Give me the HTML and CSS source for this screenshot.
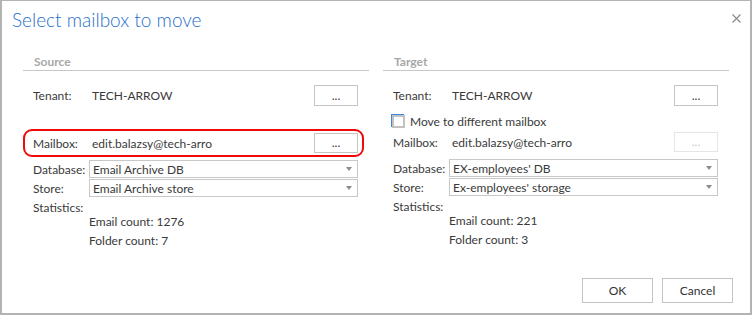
FILE: index.html
```html
<!DOCTYPE html>
<html>
<head>
<meta charset="utf-8">
<link rel="stylesheet" href="styles.css">
</head>
<body>
<div class="dialog">
  <div class="titlebar">
    <h1 class="title">Select mailbox to move</h1>
    <svg class="close" width="9" height="9" viewBox="0 0 9 9"><path d="M0.5 0.5 L8.5 8.5 M8.5 0.5 L0.5 8.5" stroke="#8a8a8a" stroke-width="1.1" fill="none"/></svg>
  </div>
  <div class="columns">
    <section class="col">
      <div class="sec-head">Source</div>
      <div class="row row-tenant">
        <span class="label">Tenant:</span>
        <span class="value">TECH-ARROW</span>
        <button class="btn-dots">...</button>
      </div>
      <div class="row highlight">
        <span class="label">Mailbox:</span>
        <span class="value">edit.balazsy@tech-arro</span>
        <button class="btn-dots">...</button>
      </div>
      <div class="row row-select row-db">
        <span class="label">Database:</span>
        <div class="select"><span>Email Archive DB</span><i class="arrow"></i></div>
      </div>
      <div class="row row-select row-store">
        <span class="label">Store:</span>
        <div class="select"><span>Email Archive store</span><i class="arrow"></i></div>
      </div>
      <div class="stats-label">Statistics:</div>
      <div class="stat">Email count: 1276</div>
      <div class="stat stat-2">Folder count: 7</div>
    </section>
    <section class="col col-right">
      <div class="sec-head">Target</div>
      <div class="row row-tenant">
        <span class="label">Tenant:</span>
        <span class="value">TECH-ARROW</span>
        <button class="btn-dots">...</button>
      </div>
      <label class="check-row"><span class="checkbox"></span>Move to different mailbox</label>
      <div class="row row-mailbox">
        <span class="label">Mailbox:</span>
        <span class="value">edit.balazsy@tech-arro</span>
        <button class="btn-dots disabled">...</button>
      </div>
      <div class="row row-select row-db-r">
        <span class="label">Database:</span>
        <div class="select"><span>EX-employees' DB</span><i class="arrow"></i></div>
      </div>
      <div class="row row-select row-store">
        <span class="label">Store:</span>
        <div class="select"><span>Ex-employees' storage</span><i class="arrow"></i></div>
      </div>
      <div class="stats-label">Statistics:</div>
      <div class="stat">Email count: 221</div>
      <div class="stat stat-2">Folder count: 3</div>
    </section>
  </div>
  <div class="footer">
    <button class="btn">OK</button>
    <button class="btn">Cancel</button>
  </div>
</div>
</body>
</html>
```
FILE: styles.css
```css
* { box-sizing: border-box; }
html, body { margin: 0; padding: 0; background: #fff; }
body {
  font-family: Lato, "Open Sans", sans-serif;
  font-size: 12px;
  color: #3a3a3a;
}
.dialog {
  width: 752px;
  height: 315px;
  border: 1px solid #b3b3b3;
  border-left-width: 2px;
  border-right-width: 2px;
  border-bottom-width: 2px;
  display: flex;
  flex-direction: column;
  background: #fff;
}
.titlebar {
  height: 52px;
  display: flex;
  justify-content: space-between;
  align-items: flex-start;
  padding: 7px 9px 0 10px;
}
.title {
  margin: 0;
  font-family: Lato, "Open Sans", sans-serif;
  font-weight: 300;
  font-size: 19px;
  line-height: 24px;
  color: #1f6fcc;
}
.close { margin-top: 6px; }
.columns {
  display: grid;
  grid-template-columns: 346px 346px;
  column-gap: 14px;
  padding-left: 21px;
}
.col { display: flex; flex-direction: column; }
.sec-head {
  height: 18px;
  line-height: 17px;
  border-bottom: 1px solid #c8c8c8;
  padding-left: 11px;
  font-weight: bold;
  color: #a8a8a8;
}
.row {
  display: grid;
  grid-template-columns: 56px 1fr 44px;
  align-items: center;
  padding: 0 11px 0 10px;
}
.row-select { grid-template-columns: 56px 1fr; }
.value { padding-left: 3px; }
.row-tenant { margin-top: 14px; height: 21px; }
.row-tenant .btn-dots { height: 21px; }
.highlight {
  margin-top: 23px;
  height: 28px;
  border: 2px solid #ee0a0a;
  border-radius: 9px;
  padding: 0 4px 0 8px;
  width: 341px;
}
.btn-dots {
  height: 20px;
  width: 44px;
  border: 1px solid #c4c4c4;
  background: #fff;
  font-family: inherit;
  font-size: 12px;
  color: #333;
  padding: 0;
  line-height: 14px;
}
.btn-dots.disabled { border-color: #e6e6e6; color: #c8c8c8; }
.row-db { margin-top: 3px; }
.row-store { margin-top: 1px; }
.select {
  height: 18px;
  border: 1px solid #c8c8c8;
  display: flex;
  align-items: center;
  justify-content: space-between;
  padding: 0 5px 0 3px;
}
.arrow {
  width: 0; height: 0;
  border-left: 3px solid transparent;
  border-right: 3px solid transparent;
  border-top: 4px solid #8c8c8c;
}
.stats-label {
  margin-top: 4px;
  height: 14px;
  line-height: 14px;
  padding-left: 10px;
}
.stat {
  height: 14px;
  line-height: 14px;
  padding-left: 66px;
}
.stat-2 { margin-top: 5px; }
.check-row {
  margin-top: 7px;
  height: 16px;
  display: flex;
  align-items: center;
  padding-left: 9px;
}
.checkbox {
  width: 13px;
  height: 13px;
  border: 2px solid #c2c2c2;
  margin-right: 5px;
  box-shadow: -1px -1px 0 #3f86d8;
}
.row-mailbox { margin-top: 3px; height: 20px; }
.row-db-r { margin-top: 7px; }
.footer {
  margin-top: auto;
  display: flex;
  justify-content: flex-end;
  gap: 9px;
  padding: 0 17px 10px 0;
}
.btn {
  width: 71px;
  height: 25px;
  border: 1px solid #c4c4c4;
  background: #fff;
  font-family: inherit;
  font-size: 12px;
  color: #333;
}
```
